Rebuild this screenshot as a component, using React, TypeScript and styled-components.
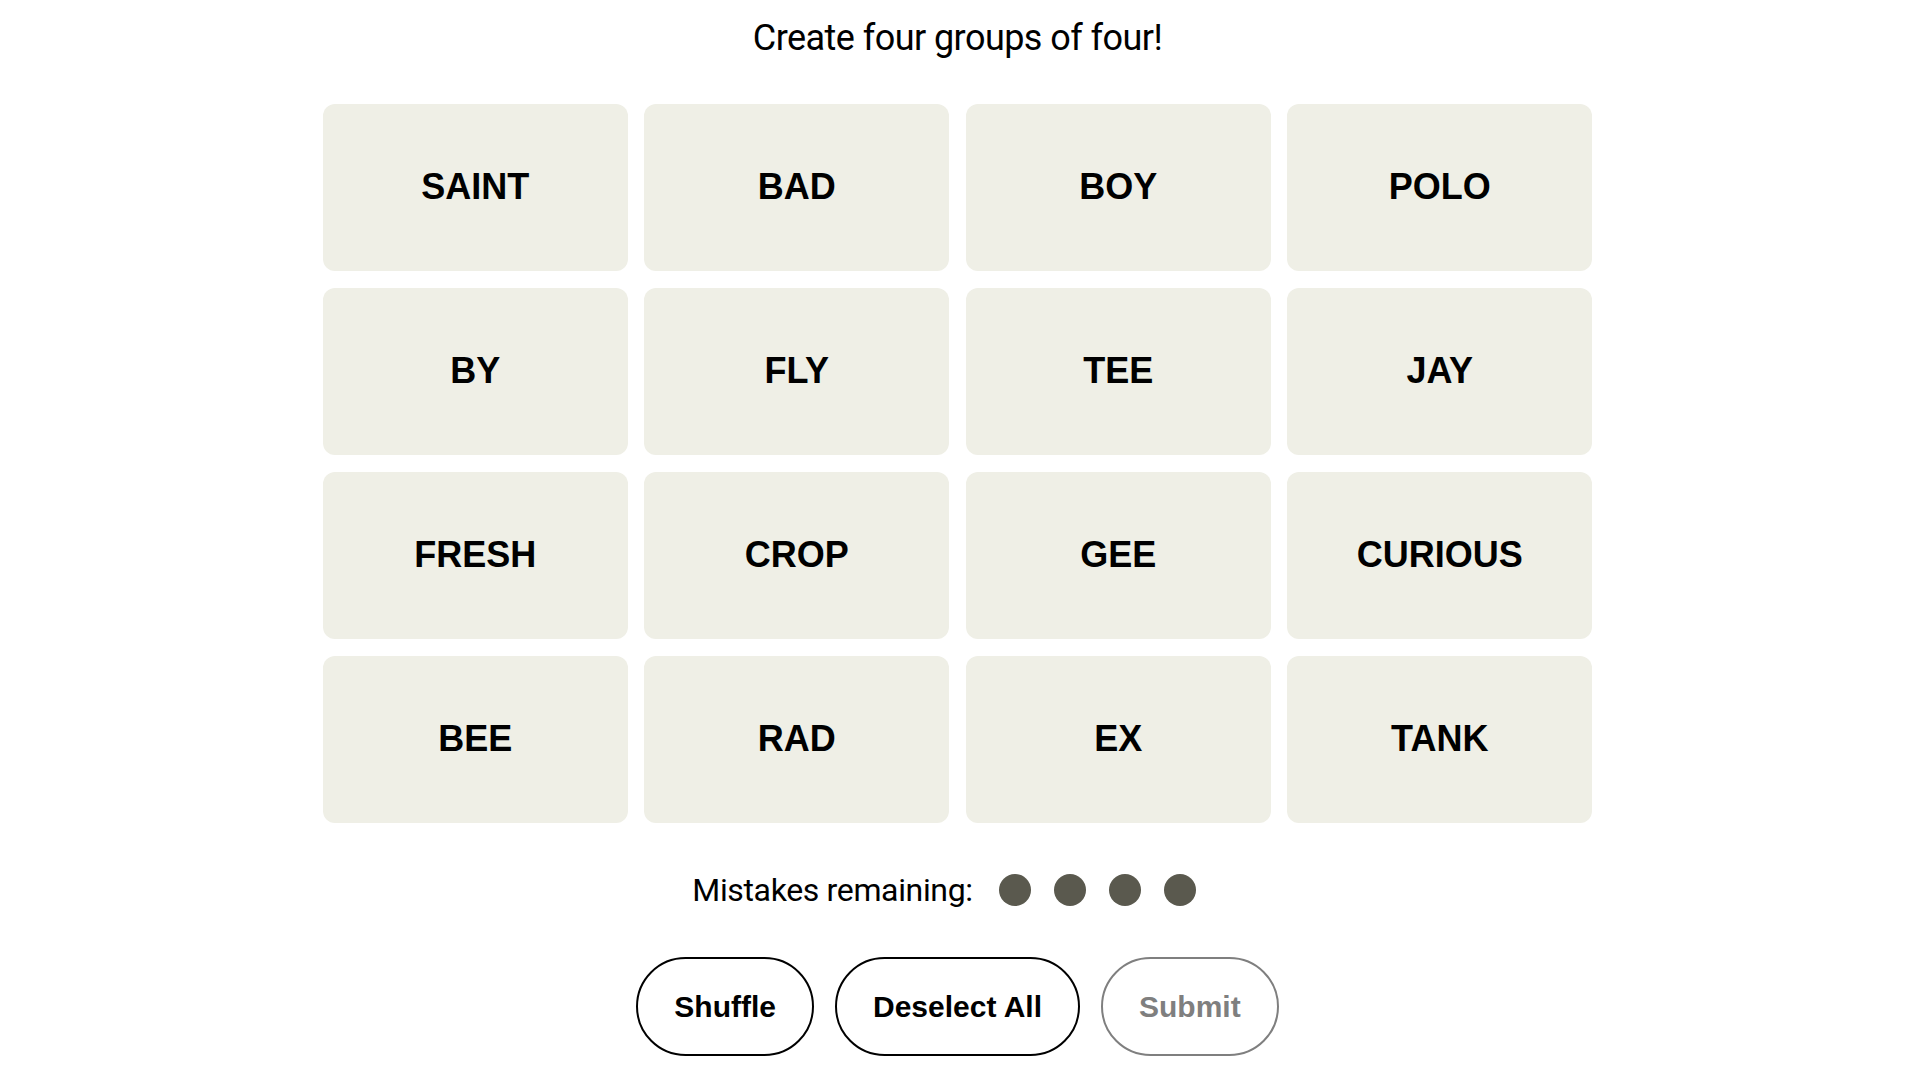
import styled, { createGlobalStyle } from "styled-components"

const GlobalStyle = createGlobalStyle`
  html, body {
    margin: 0;
    padding: 0;
    background: #ffffff;
  }
  body {
    font-family: Roboto, "Liberation Sans", Arial, sans-serif;
    color: #000000;
  }
`

const WORDS = [
  "SAINT", "BAD", "BOY", "POLO",
  "BY", "FLY", "TEE", "JAY",
  "FRESH", "CROP", "GEE", "CURIOUS",
  "BEE", "RAD", "EX", "TANK",
]

const Page = styled.main`
  display: flex;
  flex-direction: column;
  align-items: center;
  padding: 18px 5px 0 0;
`

const Prompt = styled.p`
  margin: 0;
  font-family: Roboto, "Liberation Sans", sans-serif;
  font-size: 36px;
  line-height: 40px;
  letter-spacing: -0.55px;
  font-weight: 400;
`

const Board = styled.section`
  margin-top: 46px;
  display: grid;
  grid-template-columns: repeat(4, 305px);
  grid-auto-rows: 167px;
  gap: 17px 16.5px;
`

const Tile = styled.button`
  display: flex;
  align-items: center;
  justify-content: center;
  border: none;
  border-radius: 12px;
  background: #efefe6;
  color: #000000;
  font-family: "Liberation Sans", Arial, sans-serif;
  font-weight: 700;
  font-size: 36px;
  text-transform: uppercase;
  cursor: pointer;
  padding: 0 0 1.5px;
`

const MistakesRow = styled.div`
  margin: 47px 27px 0 0;
  display: flex;
  align-items: center;
  height: 40px;
  gap: 26px;
`

const MistakesLabel = styled.span`
  font-family: Roboto, "Liberation Sans", sans-serif;
  font-size: 32px;
  line-height: 40px;
  letter-spacing: -0.35px;
`

const Dots = styled.div`
  display: flex;
  gap: 23px;
`

const Dot = styled.span`
  width: 32px;
  height: 32px;
  border-radius: 50%;
  background: #5a594e;
`

const Controls = styled.div`
  margin-top: 47px;
  display: flex;
  gap: 21px;
`

const ActionButton = styled.button<{ $muted?: boolean }>`
  height: 99px;
  padding: 0 36px;
  border-radius: 50px;
  border: 2px solid ${(p) => (p.$muted ? "#7f7f7f" : "#000000")};
  background: #ffffff;
  color: ${(p) => (p.$muted ? "#7f7f7f" : "#000000")};
  font-family: "Liberation Sans", Arial, sans-serif;
  font-weight: 700;
  font-size: 30px;
  cursor: ${(p) => (p.$muted ? "default" : "pointer")};
`

const App = () => {
  return (
    <>
      <GlobalStyle />
      <Page>
        <Prompt>Create four groups of four!</Prompt>
        <Board>
          {WORDS.map((word) => (
            <Tile key={word}>{word}</Tile>
          ))}
        </Board>
        <MistakesRow>
          <MistakesLabel>Mistakes remaining:</MistakesLabel>
          <Dots>
            {[0, 1, 2, 3].map((i) => (
              <Dot key={i} />
            ))}
          </Dots>
        </MistakesRow>
        <Controls>
          <ActionButton>Shuffle</ActionButton>
          <ActionButton>Deselect All</ActionButton>
          <ActionButton $muted disabled>
            Submit
          </ActionButton>
        </Controls>
      </Page>
    </>
  )
}

export default App
